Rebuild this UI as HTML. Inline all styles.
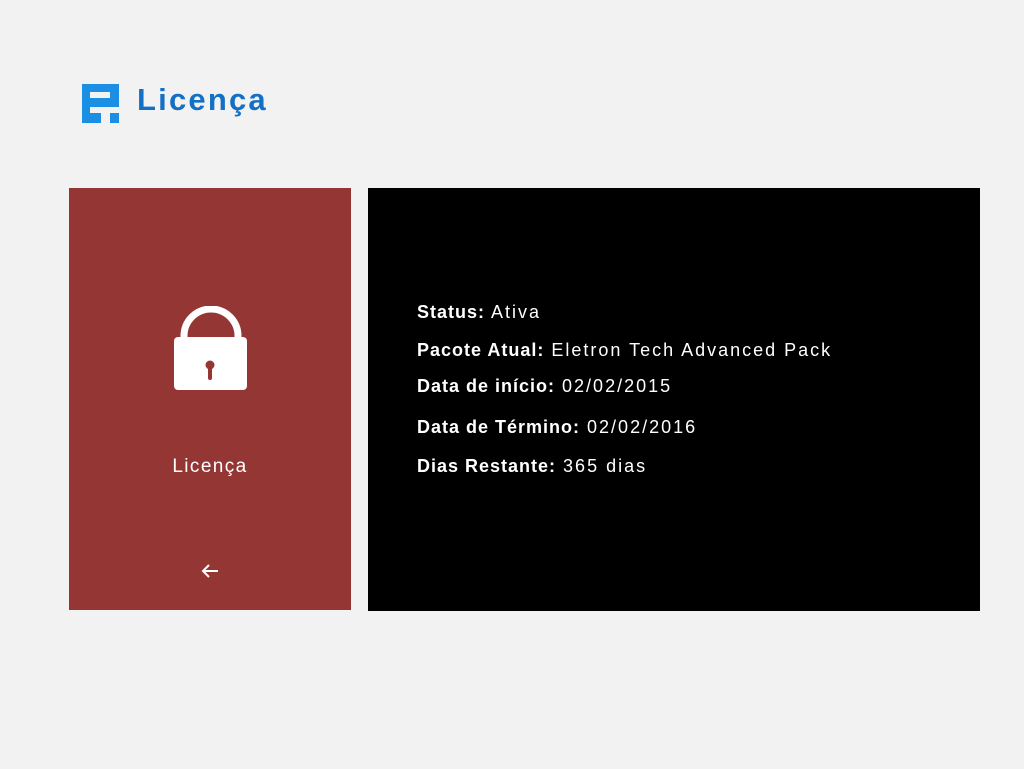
<!DOCTYPE html>
<html><head><meta charset="utf-8"><style>
body{margin:0;width:1024px;height:769px;background:#f2f2f2;font-family:"Liberation Sans",sans-serif;position:relative;overflow:hidden}
.logo{position:absolute;left:82px;top:84px}
.title{position:absolute;left:137px;top:82px;font-size:31px;font-weight:bold;color:#1470c4;letter-spacing:2.2px}
.red{position:absolute;left:69px;top:188px;width:282px;height:422px;background:#943734}
.black{position:absolute;left:368px;top:188px;width:612px;height:423px;background:#000}
.lbl{position:absolute;left:0;width:282px;top:268px;text-align:center;color:#fff;font-size:19px;letter-spacing:1.4px}
.info{position:absolute;left:49px;color:#fff;font-size:18px;white-space:nowrap;letter-spacing:2px}
.info b{font-weight:bold;letter-spacing:1px}
</style></head><body>
<svg class="logo" width="37" height="39" viewBox="0 0 37 39">
<rect width="37" height="39" fill="#1a8fe3"/>
<rect x="8" y="8" width="20" height="6" fill="#f2f2f2"/>
<rect x="8" y="23" width="29" height="6" fill="#f2f2f2"/>
<rect x="19" y="29" width="9" height="10" fill="#f2f2f2"/>
</svg>
<div class="title">Licença</div>
<div class="red">
<svg style="position:absolute;left:104px;top:118px" width="76" height="86" viewBox="0 0 76 86">
<path d="M11 34V30A26 26 0 0 1 65 30V34" fill="none" stroke="#fff" stroke-width="7"/>
<rect x="1" y="31" width="73" height="53" rx="4" fill="#fff"/>
<circle cx="37" cy="59" r="4.5" fill="#943734"/>
<rect x="35" y="60" width="4" height="14" rx="2" fill="#943734"/>
</svg>
<div class="lbl">Licença</div>
<svg style="position:absolute;left:131px;top:374px" width="20" height="18" viewBox="0 0 20 18">
<path d="M18 9H3M9 3L3 9L9 15" fill="none" stroke="#fff" stroke-width="2"/>
</svg>
</div>
<div class="black">
<div class="info" style="top:114px"><b>Status:</b> Ativa</div>
<div class="info" style="top:152px"><b>Pacote Atual:</b> Eletron Tech Advanced Pack</div>
<div class="info" style="top:188px"><b>Data de início:</b> 02/02/2015</div>
<div class="info" style="top:229px"><b>Data de Término:</b> 02/02/2016</div>
<div class="info" style="top:268px"><b>Dias Restante:</b> 365 dias</div>
</div>
</body></html>
